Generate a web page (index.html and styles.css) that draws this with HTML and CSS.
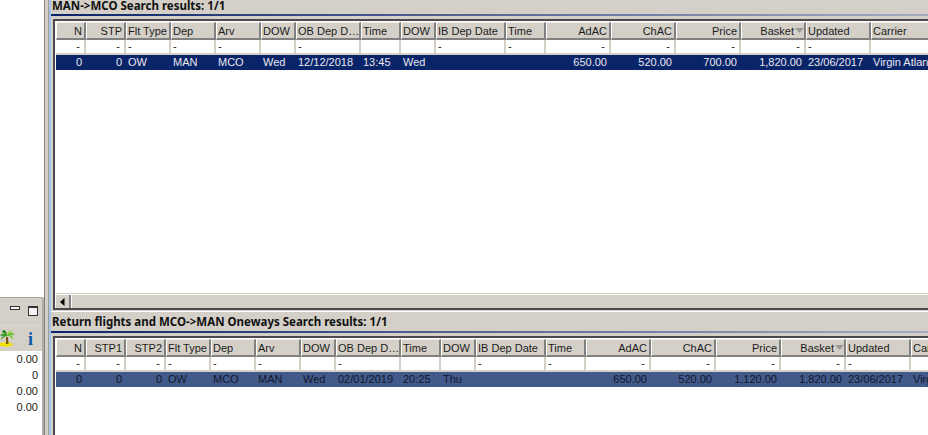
FILE: index.html
```html
<!DOCTYPE html>
<html lang="en">
<head>
<meta charset="utf-8">
<title>Search results</title>
<link rel="stylesheet" href="styles.css">
</head>
<body>
<div class="app">
  <aside class="rail">
    <div class="rail-blank"></div>
    <section class="dock">
      <div class="dock-title">
        <span class="btn-min"></span>
        <span class="btn-max"></span>
      </div>
      <div class="dock-tools">
        <svg class="palm" width="14" height="18" viewBox="0 0 14 18" aria-hidden="true">
          <ellipse cx="6" cy="14.500" rx="7" ry="2.200" fill="#f2e200"/>
          <path d="M6 7h2l.5 7H6z" fill="#7a5a10"/>
          <path d="M7 5C5 3 2 3 0 6c2-.5 3-.5 4 0-2 .5-3 2-3 4 1.500-2 3-3.500 6-4z" fill="#2f9a1c"/>
          <path d="M7 5c1-2 4-3 6-2 .5.500 1 1.500 1 2.500-1.500-1-3-1-4-.5 2 .5 3 2.500 3 4.500-1.500-2-3-3.500-6-4z" fill="#62c42a"/>
          <path d="M3 0c2 0 4 2 4 5C6 3.500 4.500 2.500 2 2.500z" fill="#1f7f14"/>
          <path d="M7 5c0-2 2-4.500 4-4.500L12 2C10 2 8.500 3 7 5z" fill="#a8d838"/>
        </svg>
        <span class="info">i</span>
      </div>
      <ul class="dock-list">
        <li>0.00</li>
        <li>0</li>
        <li>0.00</li>
        <li>0.00</li>
      </ul>
    </section>
  </aside>
  <div class="sash"></div>
  <main class="main">
    <section class="pane pane-top">
      <h2 class="pane-title">MAN-&gt;MCO Search results: 1/1</h2>
      <div class="frame">
        <div class="grid cols-out row-head">
          <div class="c r">N</div><div class="c r">STP</div><div class="c">Flt Type</div><div class="c">Dep</div><div class="c">Arv</div><div class="c">DOW</div><div class="c">OB Dep D…</div><div class="c">Time</div><div class="c">DOW</div><div class="c">IB Dep Date</div><div class="c">Time</div><div class="c r">AdAC</div><div class="c r">ChAC</div><div class="c r">Price</div><div class="c r sorted">Basket<svg class="sort" width="9" height="5" viewBox="0 0 9 5" aria-hidden="true"><path d="M0 0h9L4.500 5z"/></svg></div><div class="c">Updated</div><div class="c">Carrier</div>
        </div>
        <div class="grid cols-out row-filter">
          <div class="c r">-</div><div class="c r">-</div><div class="c">-</div><div class="c">-</div><div class="c">-</div><div class="c"></div><div class="c">-</div><div class="c"></div><div class="c"></div><div class="c">-</div><div class="c">-</div><div class="c r">-</div><div class="c r">-</div><div class="c r">-</div><div class="c r">-</div><div class="c">-</div><div class="c"></div>
        </div>
        <div class="grid cols-out row-sel">
          <div class="c r">0</div><div class="c r">0</div><div class="c">OW</div><div class="c">MAN</div><div class="c">MCO</div><div class="c">Wed</div><div class="c">12/12/2018</div><div class="c">13:45</div><div class="c">Wed</div><div class="c"></div><div class="c"></div><div class="c r">650.00</div><div class="c r">520.00</div><div class="c r">700.00</div><div class="c r">1,820.00</div><div class="c">23/06/2017</div><div class="c">Virgin Atlantic</div>
        </div>
        <div class="frame-fill"></div>
        <div class="hscroll">
          <div class="hscroll-btn"><svg width="5" height="8" viewBox="0 0 5 8" aria-hidden="true"><path d="M4.500 0v8L0 4z"/></svg></div>
          <div class="hscroll-track"></div>
        </div>
      </div>
    </section>
    <section class="pane pane-bottom">
      <h2 class="pane-title">Return flights and MCO-&gt;MAN Oneways Search results: 1/1</h2>
      <div class="frame">
        <div class="grid cols-ret row-head">
          <div class="c r">N</div><div class="c r">STP1</div><div class="c r">STP2</div><div class="c">Flt Type</div><div class="c">Dep</div><div class="c">Arv</div><div class="c">DOW</div><div class="c">OB Dep D…</div><div class="c">Time</div><div class="c">DOW</div><div class="c">IB Dep Date</div><div class="c">Time</div><div class="c r">AdAC</div><div class="c r">ChAC</div><div class="c r">Price</div><div class="c r sorted">Basket<svg class="sort" width="9" height="5" viewBox="0 0 9 5" aria-hidden="true"><path d="M0 0h9L4.500 5z"/></svg></div><div class="c">Updated</div><div class="c">Carrier</div>
        </div>
        <div class="grid cols-ret row-filter">
          <div class="c r">-</div><div class="c r">-</div><div class="c r">-</div><div class="c">-</div><div class="c">-</div><div class="c">-</div><div class="c"></div><div class="c">-</div><div class="c"></div><div class="c"></div><div class="c">-</div><div class="c">-</div><div class="c r">-</div><div class="c r">-</div><div class="c r">-</div><div class="c r">-</div><div class="c">-</div><div class="c"></div>
        </div>
        <div class="grid cols-ret row-dim">
          <div class="c r">0</div><div class="c r">0</div><div class="c r">0</div><div class="c">OW</div><div class="c">MCO</div><div class="c">MAN</div><div class="c">Wed</div><div class="c">02/01/2019</div><div class="c">20:25</div><div class="c">Thu</div><div class="c"></div><div class="c"></div><div class="c r">650.00</div><div class="c r">520.00</div><div class="c r">1,120.00</div><div class="c r">1,820.00</div><div class="c">23/06/2017</div><div class="c">Virgin Atlantic</div>
        </div>
        <div class="frame-fill"></div>
      </div>
    </section>
  </main>
</div>
</body>
</html>
```

FILE: styles.css
```css
* { box-sizing: border-box; }

html, body {
  margin: 0;
  height: 100%;
  overflow: hidden;
  background: #d4d0c8;
}

body {
  font: 11px/13px "Liberation Sans", Arial, sans-serif;
  color: #1c1c1c;
}

.app {
  display: flex;
  width: 928px;
  height: 435px;
  overflow: hidden;
}

/* Left rail */
.rail {
  flex: 0 0 45px;
  display: flex;
  flex-direction: column;
  border-right: 1px solid #808080;
}

.rail-blank {
  flex: 0 0 297px;
  background: #fff;
}

.dock {
  flex: 1;
  display: flex;
  flex-direction: column;
  border-top: 1px solid #a8a59e;
  border-right: 2px solid #b0ada6;
  border-top-right-radius: 4px;
  background: #d4d0c8;
}

.dock-title {
  flex: 0 0 27px;
  display: flex;
  align-items: flex-start;
  gap: 8px;
  padding: 8px 0 0 10px;
}

.btn-min {
  width: 10px;
  height: 4px;
  border: 1px solid #333;
  background: #f4f4f4;
}

.btn-max {
  width: 10px;
  height: 10px;
  border: 1px solid #333;
  border-top-width: 2px;
  background: #f4f4f4;
}

.dock-tools {
  flex: 0 0 26px;
  display: flex;
  align-items: center;
  gap: 14px;
  border-top: 1px solid #dcd9d2;
}

.palm {
  flex: none;
  margin-top: 1px;
}

.info {
  font: bold 18px/18px "Liberation Serif", serif;
  color: #0a5aa8;
}

.dock-list {
  flex: 1;
  margin: 0;
  padding: 0 4px 0 0;
  list-style: none;
  background: #fff;
}

.dock-list li {
  height: 16px;
  line-height: 16px;
  text-align: right;
}

/* Sash between rail and main */
.sash {
  flex: 0 0 6px;
  border-left: 3px solid #d4d0c8;
  border-right: 2px solid #a6c4ea;
  background: #a09d97;
}

/* Main column */
.main {
  flex: 1;
  min-width: 0;
  display: flex;
  flex-direction: column;
}

.pane {
  display: flex;
  flex-direction: column;
  min-height: 0;
}

.pane-top {
  flex: 0 0 311px;
}

.pane-bottom {
  flex: 1;
  border-top: 1px solid #fff;
  padding-top: 3px;
}

.pane-title {
  flex: none;
  height: 16px;
  margin: 0 0 3px;
  padding-left: 1px;
  border-bottom: 2px solid;
  border-image: linear-gradient(to right, #0a246a, #a6abc2) 1;
  font: bold 11.5px/12px "Noto Sans", sans-serif;
  color: #111;
  white-space: nowrap;
}

.pane-bottom .pane-title {
  height: 18px;
  padding-top: 1px;
  margin-bottom: 3px;
}

.frame {
  flex: 1;
  min-height: 0;
  display: flex;
  flex-direction: column;
  margin: 0 0 1px 2px;
  padding: 1px 0 0 1px;
  overflow: hidden;
  background: #fff;
  border-top: 2px solid #4a4a4a;
  border-left: 2px solid #4a4a4a;
}

.pane-top .frame {
  border-bottom: 2px solid #4a4a4a;
}

.pane-bottom .frame {
  margin-bottom: 0;
}

.frame-fill {
  flex: 1;
  background: #fff;
}

/* Table rows */
.grid {
  flex: none;
  display: grid;
  width: max-content;
}

.cols-out {
  grid-template-columns: 30px 40px 45px 45px 45px 35px 65px 40px 35px 70px 40px 65px 65px 65px 65px 65px 100px;
}

.cols-ret {
  grid-template-columns: 30px 40px 40px 45px 45px 45px 35px 65px 40px 35px 70px 40px 65px 65px 65px 65px 65px 100px;
}

.c {
  min-width: 0;
  padding: 0 2px;
  overflow: hidden;
  white-space: nowrap;
}

.r {
  padding-right: 4px;
  text-align: right;
}

.row-head {
  height: 18px;
  background: #d4d0c8;
}

.row-head .c {
  padding-top: 1px;
  line-height: 14px;
  border-top: 1px solid #eeece7;
  border-left: 1px solid #fff;
  border-right: 2px solid #808080;
  border-bottom: 2px solid #808080;
  padding-left: 1px;
}

.row-head .r {
  padding-right: 2px;
}

.row-head .sorted {
  display: flex;
  justify-content: flex-end;
  align-items: center;
  gap: 1px;
  padding-right: 0;
}

.sort {
  flex: none;
  fill: #9a9a9a;
  margin-bottom: 2px;
}

.row-filter {
  height: 15px;
}

.row-filter .c {
  line-height: 12px;
  border-right: 2px solid #d4d0c8;
  border-bottom: 2px solid #d4d0c8;
}

.row-sel,
.row-dim {
  height: 15px;
}

.row-sel .c,
.row-dim .c {
  line-height: 15px;
}

.row-sel {
  background: #0a246a;
  color: #e8e8ee;
}

.row-dim {
  background: #425a8a;
  color: #10172e;
}

/* Horizontal scrollbar */
.hscroll {
  flex: none;
  height: 15px;
  display: flex;
  border-top: 1px solid #d4d0c8;
  background: #fff;
  padding-top: 1px;
}

.hscroll-btn {
  flex: 0 0 15px;
  display: flex;
  align-items: center;
  justify-content: center;
  background: #d4d0c8;
  border-right: 2px solid #808080;
}

.hscroll-track {
  flex: 1;
  background: #d4d0c8;
  border-left: 1px solid #fff;
}
```
